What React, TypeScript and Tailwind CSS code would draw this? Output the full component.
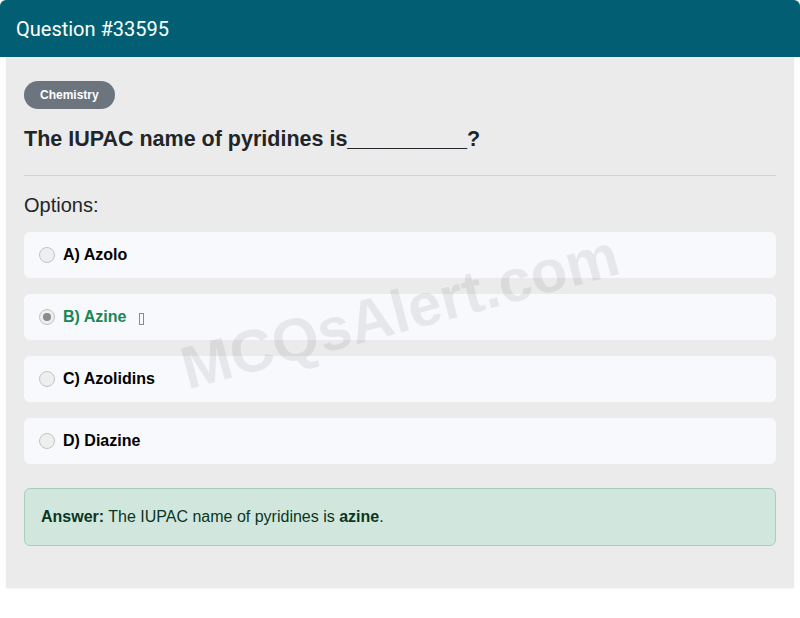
import React from "react";

const options = [
  { key: "A", label: "Azolo" },
  { key: "B", label: "Azine", correct: true },
  { key: "C", label: "Azolidins" },
  { key: "D", label: "Diazine" },
];

export default function App() {
  return (
    <div className="relative w-[800px] h-[618px] bg-white overflow-hidden" style={{ fontFamily: '"Liberation Sans", Arial, sans-serif' }}>
      <div className="h-[57px] bg-[#025f73] rounded-t-[6px] flex items-center px-4">
        <span className="text-white text-[20px]" style={{ fontFamily: 'Roboto, "Liberation Sans", sans-serif' }}>Question #33595</span>
      </div>
      <div className="mx-[6px] h-[531px] bg-[#ebebeb] px-[18px] pt-[24px] shadow-[0_1px_2px_rgba(0,0,0,0.05)]">
        <div className="flex">
          <span className="h-[28px] px-4 rounded-full bg-[#6c757d] text-white text-[12px] font-bold flex items-center">Chemistry</span>
        </div>
        <h1 className="mt-[15px] text-[21.5px] font-bold text-[#212529] leading-[30px]">The IUPAC name of pyridines is__________?</h1>
        <div className="mt-[21px] h-px bg-[#d3d3d3]" />
        <div className="mt-[17px] text-[20px] text-[#212529] leading-[24px]">Options:</div>
        <div className="mt-[15px] flex flex-col gap-[16px]">
          {options.map((o) => (
            <div key={o.key} className="h-[46px] rounded-[6px] bg-[#f8f9fc] flex items-center px-[15px]">
              <span className="w-[16px] h-[16px] rounded-full border border-[#c4c4c4] bg-[#eeeeee] flex items-center justify-center">
                {o.correct && <span className="w-[8px] h-[8px] rounded-full bg-[#8a8a8a]" />}
              </span>
              <span className={`ml-[8px] text-[16px] font-bold ${o.correct ? "text-[#198754]" : "text-black"}`}>
                {o.key}) {o.label}
              </span>
              {o.correct && <span className="ml-[13px] mt-[4px] w-[5px] h-[12px] border border-[#8a8a8a]" />}
            </div>
          ))}
        </div>
        <div className="mt-[24px] h-[58px] rounded-[6px] bg-[#d1e7dd] border border-[#a3cfbb] flex items-center px-4 text-[16px] text-[#0a3622]">
          <span><b>Answer:</b> The IUPAC name of pyridines is <b>azine</b>.</span>
        </div>
      </div>
      <div className="absolute left-[400px] top-[312px] -translate-x-1/2 -translate-y-1/2 -rotate-[15deg] text-[60px] font-bold text-black/[0.07] whitespace-nowrap pointer-events-none">
        MCQsAlert.com
      </div>
    </div>
  );
}
